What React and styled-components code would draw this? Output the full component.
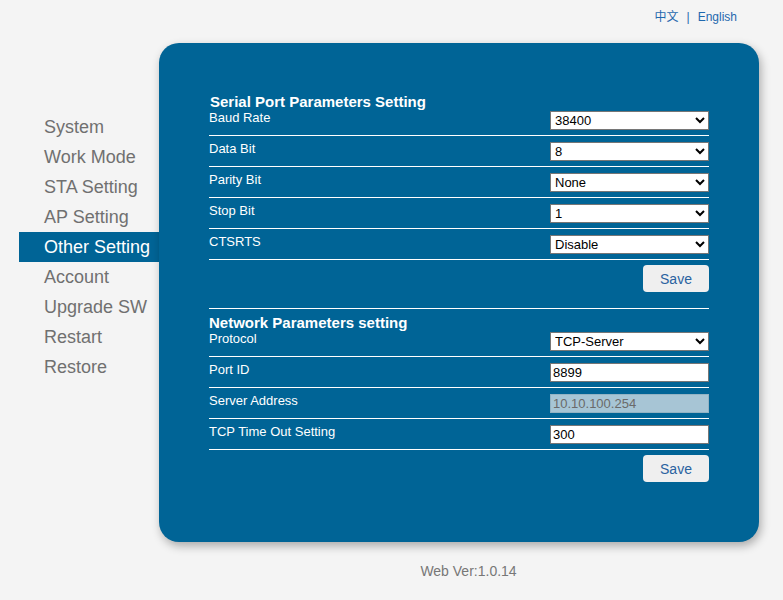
import React, { useState } from 'react';
import styled, { createGlobalStyle } from 'styled-components';

const GlobalStyle = createGlobalStyle`
    body {
        margin: 0;
        background: #f4f4f4;
        font-family: "Liberation Sans", Arial, "Noto Sans CJK SC", sans-serif;
    }
`

const Page = styled.div`
    width: 783px;
    min-height: 600px;
`

const TopBar = styled.div`
    height: 43px;
    box-sizing: border-box;
    padding: 10px 46px 0 0;
    display: flex;
    justify-content: flex-end;
    align-items: flex-start;
    font-size: 12px;
    line-height: 14px;
    color: #1f68ae;
`

const Lang = styled.a`
    color: #1f68ae;
    text-decoration: none;
    cursor: pointer;
`

const Sep = styled.span`
    margin: 0 8px;
`

const Main = styled.div`
    display: flex;
    align-items: flex-start;
    padding-left: 19px;
`

const Menu = styled.ul`
    list-style: none;
    margin: 69px 0 0;
    padding: 0;
    width: 140px;
`

const MenuItem = styled.li`
    height: 30px;
    line-height: 30px;
    padding-left: 25px;
    font-size: 18px;
    white-space: nowrap;
    color: ${props => props.$active ? '#ffffff' : '#707070'};
    background: ${props => props.$active ? '#006496' : 'transparent'};
    cursor: pointer;
`

const Panel = styled.div`
    width: 600px;
    height: 499px;
    box-sizing: border-box;
    padding: 49px 50px 0;
    background: #006496;
    border-radius: 20px;
    box-shadow: 2px 4px 10px rgba(0, 0, 0, 0.3);
    color: #ffffff;
`

const Section = styled.div`
    padding-top: ${props => props.$divided ? '4px' : '0'};
    border-top: ${props => props.$divided ? '1px solid #ffffff' : 'none'};
`

const Title = styled.div`
    padding-top: 2px;
    margin-bottom: -1px;
    font-size: 15px;
    line-height: 16px;
    font-weight: bold;
    padding-left: ${props => props.$indent ? '1px' : '0'};
`

const Row = styled.div`
    display: flex;
    justify-content: space-between;
    align-items: flex-start;
    padding: ${props => props.$first ? '0' : '4px'} 0 5px;
    border-bottom: 1px solid #ffffff;
`

const Label = styled.span`
    padding-top: 1px;
    font-size: 13px;
    line-height: 15px;
`

const Select = styled.select`
    width: 159px;
    height: 19px;
    margin: 2px 0 0;
    padding: 0;
    box-sizing: border-box;
    border: 1px solid #767676;
    border-radius: 0;
    background: #ffffff;
    color: #000000;
    font-family: "Liberation Sans", Arial, sans-serif;
    font-size: 13px;
`

const Input = styled.input`
    width: 159px;
    height: 19px;
    margin: 2px 0 0;
    padding: 0 2px;
    box-sizing: border-box;
    border: 1px solid ${props => props.disabled ? '#93b3c4' : '#767676'};
    border-radius: 0;
    background: ${props => props.disabled ? '#a7c5d5' : '#ffffff'};
    color: ${props => props.disabled ? '#6a6a6a' : '#000000'};
    font-family: "Liberation Sans", Arial, sans-serif;
    font-size: 13px;
`

const Actions = styled.div`
    display: flex;
    justify-content: flex-end;
    padding: 5px 0 16px;
`

const SaveButton = styled.button`
    width: 66px;
    height: 27px;
    border: none;
    border-radius: 4px;
    background: #efefef;
    color: #2a62a0;
    font-family: "Liberation Sans", Arial, sans-serif;
    font-size: 14px;
    cursor: pointer;
`

const Footer = styled.div`
    width: 759px;
    box-sizing: border-box;
    padding: 21px 0 0 178px;
    text-align: center;
    font-size: 14px;
    line-height: 16px;
    color: #777777;
`

const menu = ['System', 'Work Mode', 'STA Setting', 'AP Setting', 'Other Setting', 'Account', 'Upgrade SW', 'Restart', 'Restore'];

const serialRows = [
    { label: 'Baud Rate', value: '38400', options: ['1200', '2400', '4800', '9600', '19200', '38400', '57600', '115200'] },
    { label: 'Data Bit', value: '8', options: ['5', '6', '7', '8'] },
    { label: 'Parity Bit', value: 'None', options: ['None', 'Odd', 'Even'] },
    { label: 'Stop Bit', value: '1', options: ['1', '2'] },
    { label: 'CTSRTS', value: 'Disable', options: ['Disable', 'Enable'] },
];

function App() {
    const [active, setActive] = useState('Other Setting');

    return (
        <Page>
            <GlobalStyle />
            <TopBar>
                <Lang>中文</Lang>
                <Sep>|</Sep>
                <Lang>English</Lang>
            </TopBar>
            <Main>
                <Menu>
                    {menu.map(item => (
                        <MenuItem key={item} $active={item === active} onClick={() => setActive(item)}>
                            {item}
                        </MenuItem>
                    ))}
                </Menu>
                <Panel>
                    <Section>
                        <Title $indent>Serial Port Parameters Setting</Title>
                        {serialRows.map((row, i) => (
                            <Row key={row.label} $first={i === 0}>
                                <Label>{row.label}</Label>
                                <Select defaultValue={row.value}>
                                    {row.options.map(o => <option key={o}>{o}</option>)}
                                </Select>
                            </Row>
                        ))}
                        <Actions>
                            <SaveButton>Save</SaveButton>
                        </Actions>
                    </Section>
                    <Section $divided>
                        <Title>Network Parameters setting</Title>
                        <Row $first>
                            <Label>Protocol</Label>
                            <Select defaultValue="TCP-Server">
                                <option>TCP-Server</option>
                                <option>TCP-Client</option>
                                <option>UDP-Server</option>
                                <option>UDP-Client</option>
                            </Select>
                        </Row>
                        <Row>
                            <Label>Port ID</Label>
                            <Input defaultValue="8899" />
                        </Row>
                        <Row>
                            <Label>Server Address</Label>
                            <Input defaultValue="10.10.100.254" disabled />
                        </Row>
                        <Row>
                            <Label>TCP Time Out Setting</Label>
                            <Input defaultValue="300" />
                        </Row>
                        <Actions>
                            <SaveButton>Save</SaveButton>
                        </Actions>
                    </Section>
                </Panel>
            </Main>
            <Footer>Web Ver:1.0.14</Footer>
        </Page>
    );
}

export default App;
